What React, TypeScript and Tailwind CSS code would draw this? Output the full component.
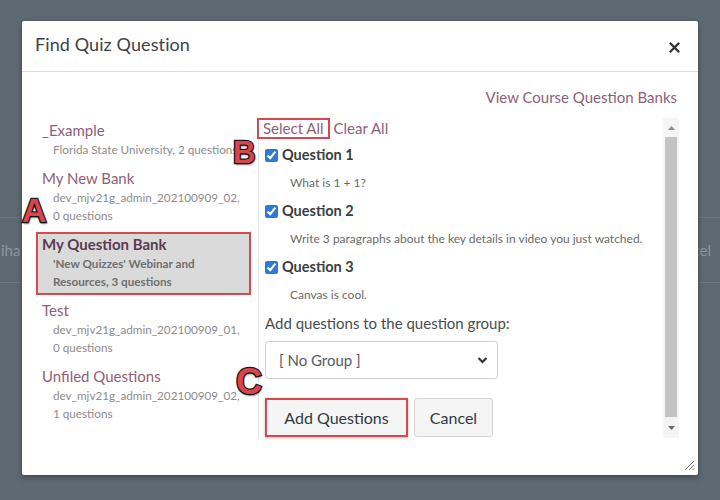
import React from "react";

type Bank = { name: string; lines: string[]; selected?: boolean };

const banks: Bank[] = [
  { name: "_Example", lines: ["Florida State University, 2 questions"] },
  { name: "My New Bank", lines: ["dev_mjv21g_admin_202100909_02,", "0 questions"] },
  {
    name: "My Question Bank",
    lines: ["'New Quizzes' Webinar and", "Resources, 3 questions"],
    selected: true,
  },
  { name: "Test", lines: ["dev_mjv21g_admin_202100909_01,", "0 questions"] },
  { name: "Unfiled Questions", lines: ["dev_mjv21g_admin_202100909_02,", "1 questions"] },
];

const questions = [
  { title: "Question 1", text: "What is 1 + 1?" },
  { title: "Question 2", text: "Write 3 paragraphs about the key details in video you just watched." },
  { title: "Question 3", text: "Canvas is cool." },
];

function Marker({ ch, className }: { ch: string; className: string }) {
  return (
    <span
      className={`absolute leading-none font-bold text-[#d9444f] [font-family:'Liberation_Sans',Arial,sans-serif] [-webkit-text-stroke:2.5px_#1c1c1c] [paint-order:stroke_fill] [text-shadow:1px_2px_2px_rgba(0,0,0,0.45)] ${className}`}
    >
      {ch}
    </span>
  );
}

export default function App() {
  return (
    <div className="relative w-[720px] h-[500px] overflow-hidden bg-[#5e6972] font-['Lato','Noto_Sans',sans-serif]">
      {/* page behind the modal */}
      <div className="pt-[217px]">
        <div className="h-[66px] border-y border-[#6d777f] flex items-center justify-between text-[15px] text-[#8f989f]">
          <span className="ml-[1px]">iha</span>
          <span className="mr-[9px]">Cancel</span>
        </div>
      </div>

      {/* modal */}
      <div className="absolute left-[22px] top-[21px] w-[676px] h-[454px] bg-white rounded-[2px] shadow-[0_2px_6px_rgba(0,0,0,0.35)] flex flex-col">
        <div className="h-[51px] shrink-0 border-b border-[#dcdcdc] flex items-center justify-between pl-[13px] pr-[18px]">
          <span className="text-[18px] text-[#3b4349] tracking-[0.1px] mb-[3px]">Find Quiz Question</span>
          <svg width="11" height="11" viewBox="0 0 11 11" className="mt-[2px]">
            <path d="M1.5 1.5 L9.5 9.5 M9.5 1.5 L1.5 9.5" stroke="#333" strokeWidth="2.4" strokeLinecap="round" />
          </svg>
        </div>

        <div className="flex-1 flex flex-col pl-[14px] pr-[19px]">
          <div className="h-[46px] shrink-0 flex justify-end pt-[15px]">
            <span className="text-[15px] leading-[20px] text-[#8f6079] mr-[2px]">View Course Question Banks</span>
          </div>

          <div className="h-[320px] flex">
            {/* bank list */}
            <div className="w-[222px] shrink-0 pr-[7px]">
              {banks.map((b) => (
                <div
                  key={b.name}
                  className={`mb-[3px] pb-[3px] pl-[4px] border-2 whitespace-nowrap overflow-hidden ${
                    b.selected ? "bg-[#dadada] border-[#d9474f]" : "border-transparent"
                  }`}
                >
                  <div
                    className={`text-[15px] leading-[20px] ${
                      b.selected ? "text-[#5a3c50] font-bold" : "text-[#8f6079]"
                    }`}
                  >
                    {b.name}
                  </div>
                  {b.lines.map((l) => (
                    <div
                      key={l}
                      className={`pl-[11px] text-[11.7px] leading-[18px] ${
                        b.selected ? "text-[#6f6f6f] font-bold" : "text-[#8c8c8c]"
                      }`}
                    >
                      {l}
                    </div>
                  ))}
                </div>
              ))}
            </div>

            {/* question panel */}
            <div className="flex-1 flex border-l border-[#e4e4e4]">
              <div className="flex-1 pl-[6px]">
                <div className="h-[21px] flex items-center text-[15px] text-[#8f6079] -ml-[8px]">
                  <span className="h-[21px] flex items-center border-2 border-[#d9474f] px-[4px]">Select All</span>
                  <span className="ml-[4px]">Clear All</span>
                </div>

                <div className="mt-[6px]">
                  {questions.map((q) => (
                    <div key={q.title} className="mb-[10px]">
                      <label className="h-[20px] flex items-center gap-[4px]">
                        <input
                          type="checkbox"
                          defaultChecked
                          className="w-[13px] h-[13px] m-0 accent-[#2e7bd6]"
                        />
                        <span className="text-[14.5px] font-bold text-[#3a3f44]">{q.title}</span>
                      </label>
                      <div className="mt-[10px] ml-[25px] text-[12px] leading-[16px] text-[#6b6b6b]">{q.text}</div>
                    </div>
                  ))}
                </div>

                <div className="mt-[9px] text-[15px] leading-[20px] text-[#474c50]">
                  Add questions to the question group:
                </div>
                <div className="mt-[8px] w-[233px] h-[38px] border border-[#d3d3d3] rounded-[3px] flex items-center justify-between pl-[13px] pr-[9px]">
                  <span className="text-[15px] text-[#555b60]">[ No Group ]</span>
                  <svg width="11" height="8" viewBox="0 0 11 8">
                    <path d="M1.5 2 L5.5 6 L9.5 2" fill="none" stroke="#333" strokeWidth="2.2" />
                  </svg>
                </div>

                <div className="mt-[19px] flex gap-[6px]">
                  <div className="w-[143px] h-[39px] border-2 border-[#d9474f] bg-[#f5f5f5] flex items-center justify-center text-[16px] text-[#2f3a42] shadow-[0_1px_3px_rgba(0,0,0,0.25)]">
                    Add Questions
                  </div>
                  <div className="w-[79px] h-[39px] border border-[#d5d5d5] rounded-[3px] bg-[#f5f5f5] flex items-center justify-center text-[16px] text-[#2f3a42]">
                    Cancel
                  </div>
                </div>
              </div>

              {/* scrollbar */}
              <div className="w-[16px] shrink-0 bg-[#f4f4f4] flex flex-col">
                <div className="h-[19px] flex items-center justify-center">
                  <svg width="7" height="4" viewBox="0 0 7 4">
                    <path d="M0 4 L3.5 0 L7 4 Z" fill="#8a8a8a" />
                  </svg>
                </div>
                <div className="flex-1 mx-[2px] bg-[#c3c3c3]" />
                <div className="h-[21px] flex items-center justify-center">
                  <svg width="7" height="4" viewBox="0 0 7 4">
                    <path d="M0 0 L3.5 4 L7 0 Z" fill="#6a6a6a" />
                  </svg>
                </div>
              </div>
            </div>
          </div>
        </div>

        {/* resize grip */}
        <svg width="12" height="12" viewBox="0 0 12 12" className="absolute right-[3px] bottom-[4px]">
          <path d="M11 2 L2 11 M11 6 L6 11 M11 9.5 L9.5 11" stroke="#777" strokeWidth="1" />
        </svg>
      </div>

      {/* annotation letters */}
      <Marker ch="A" className="left-[22px] top-[193px] text-[34px]" />
      <Marker ch="B" className="left-[233px] top-[137px] text-[31px]" />
      <Marker ch="C" className="left-[236px] top-[364px] text-[36px]" />
    </div>
  );
}
